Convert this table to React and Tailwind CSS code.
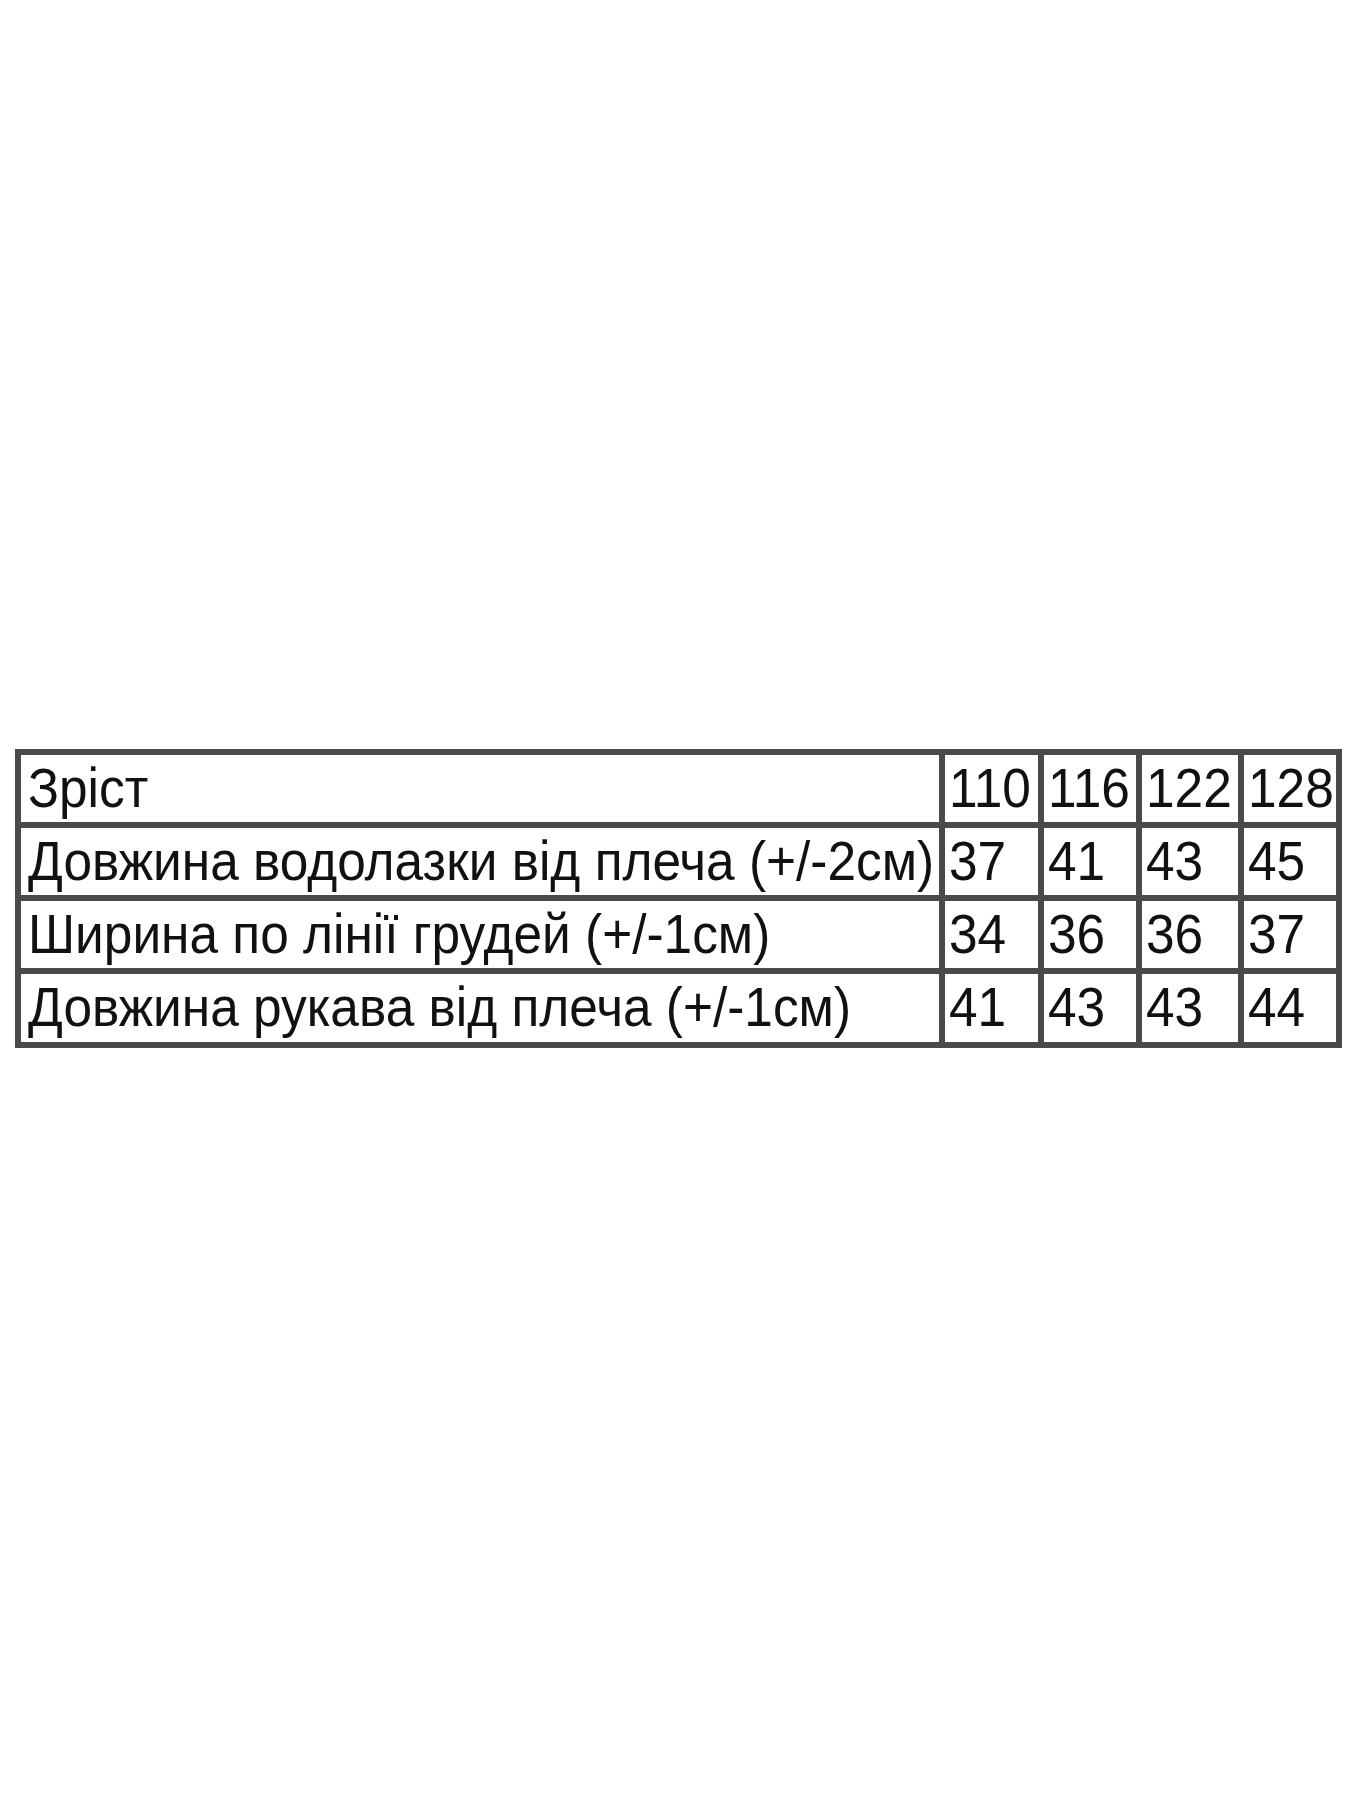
export default function App() {
  const rows = [
    { label: "Зріст", vals: ["110", "116", "122", "128"], h: "h-[73px]" },
    { label: "Довжина водолазки від плеча (+/-2см)", vals: ["37", "41", "43", "45"], h: "h-[73px]" },
    { label: "Ширина по лінії грудей (+/-1см)", vals: ["34", "36", "36", "37"], h: "h-[73px]" },
    { label: "Довжина рукава від плеча (+/-1см)", vals: ["41", "43", "43", "44"], h: "h-[74px]" },
  ];
  const cell =
    "border-[3px] border-[#4a4a4a] flex items-center text-[51.4px] leading-none text-[#111] whitespace-nowrap overflow-hidden";
  return (
    <div className="w-[1350px] h-[1800px] bg-white pt-[749px] pl-[15px]" style={{ fontFamily: '"Liberation Sans", Arial, sans-serif' }}>
      <div className="w-[1327px] border-[3px] border-[#4a4a4a] grid grid-cols-[924px_99px_98px_102px_98px]">
        {rows.map((r, i) => (
          <div key={i} className="contents">
            <div className={`${cell} ${r.h} pl-[7px]`}>
              <span className="inline-block origin-center scale-y-[1.08]">{r.label}</span>
            </div>
            {r.vals.map((v, j) => (
              <div key={j} className={`${cell} ${r.h} pl-[4px]`}>
                <span className="inline-block origin-center scale-y-[1.08]">{v}</span>
              </div>
            ))}
          </div>
        ))}
      </div>
    </div>
  );
}
